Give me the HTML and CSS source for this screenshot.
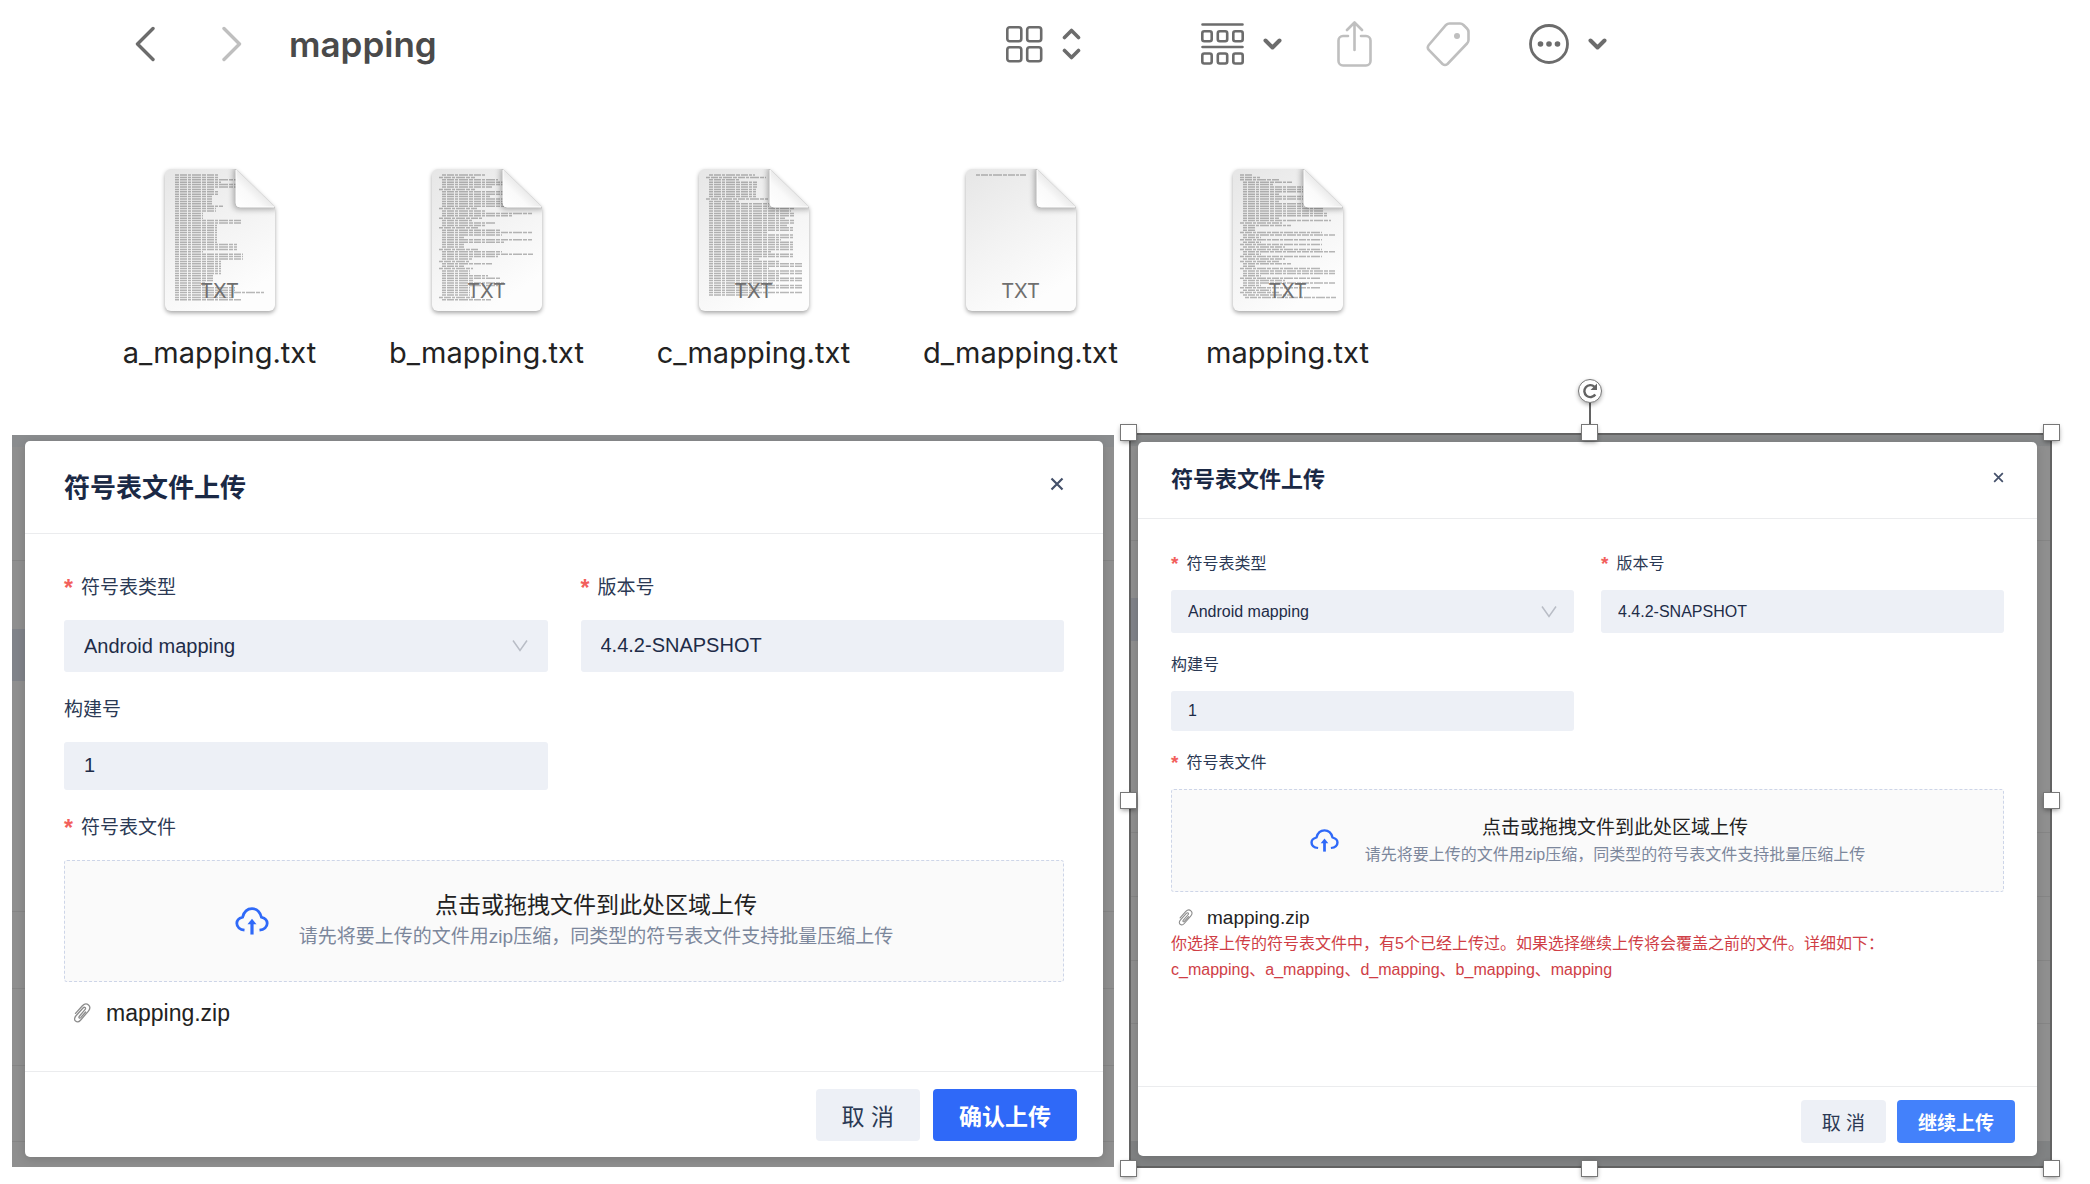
FILE: index.html
```html
<!DOCTYPE html>
<html lang="zh-CN">
<head>
<meta charset="utf-8">
<meta name="viewport" content="width=device-width, initial-scale=1">
<title>mapping</title>
<link rel="stylesheet" href="styles.css">
</head>
<body>
<svg class="defs" aria-hidden="true">
  <defs>
    <linearGradient id="paper" x1="0" y1="0" x2="0.5" y2="1">
      <stop offset="0" stop-color="#e6e6e6"/><stop offset="0.5" stop-color="#f2f2f2"/><stop offset="1" stop-color="#fdfdfd"/>
    </linearGradient>
    <linearGradient id="curl" x1="0" y1="1" x2="0.55" y2="0.45">
      <stop offset="0" stop-color="#ffffff"/><stop offset="0.6" stop-color="#fafafa"/><stop offset="1" stop-color="#e6e6e6"/>
    </linearGradient>
    <filter id="soft" x="-30%" y="-30%" width="160%" height="160%"><feGaussianBlur stdDeviation="3"/></filter>
    <clipPath id="sheet"><path d="M6 0H71L110 38V136a6 6 0 0 1-6 6H6a6 6 0 0 1-6-6V6a6 6 0 0 1 6-6z"/></clipPath>
    <symbol id="doc" viewBox="0 0 110 142" overflow="visible">
      <path d="M6 0H71L110 38V136a6 6 0 0 1-6 6H6a6 6 0 0 1-6-6V6a6 6 0 0 1 6-6z" fill="url(#paper)"/>
    </symbol>
    <symbol id="fold" viewBox="0 0 110 142" overflow="visible">
      <g clip-path="url(#sheet)"><path d="M69 0V36q0 4 4 4H112V30L76-4z" fill="#000" opacity="0.35" filter="url(#soft)"/></g>
      <path d="M71 0V34q0 4 4 4H110z" fill="url(#curl)"/>
      <path d="M71 1V34q0 4 4 4H109" fill="none" stroke="#fff"/>
    </symbol>
    <symbol id="down" viewBox="0 0 19 12"><path d="M2.500 2.500L9.500 9.500L16.500 2.500" fill="none" stroke="currentColor" stroke-width="4" stroke-linecap="round" stroke-linejoin="round"/></symbol>
    <symbol id="close" viewBox="0 0 14 14"><path d="M1.500 1.500L12.500 12.500M12.500 1.500L1.500 12.500" stroke="currentColor" stroke-width="2.200"/></symbol>
    <symbol id="arrow" viewBox="0 0 16 12"><path d="M1 0.500L8 10.500L15 0.500" fill="none" stroke="currentColor" stroke-width="1.500"/></symbol>
    <symbol id="cloud" viewBox="0 0 34 30" preserveAspectRatio="none">
      <path d="M9.500 24.800C5 24.300 1.800 21.500 1.800 17.500C1.800 14 4 12 7.600 11C9 5 12.500 1.800 17 1.800S25 5 26.400 11C30 12 32.200 14 32.200 17.500C32.200 21.500 29 24.300 24.500 24.800" fill="none" stroke="currentColor" stroke-width="2.800"/>
      <path d="M17 29.500V17" stroke="currentColor" stroke-width="3.200"/><path d="M17 12.500l4.500 6h-9z" fill="currentColor"/>
    </symbol>
    <symbol id="clip" viewBox="0 0 18 20">
      <path d="M6.200 13.500L12 6.700C13.600 4.800 11.400 3.400 10 5L3 12.800C-1 17.400 4.300 20.800 7.500 17.200L15.200 8.400C19.500 3.300 13.600-1.700 9.400 2.700L2.500 10.400M6.200 13.500C5.300 14.800 6.700 15.600 7.700 14.600L12.600 9" fill="none" stroke="currentColor" stroke-width="1.300" stroke-linecap="round"/>
    </symbol>
  </defs>
</svg>

<header class="bar">
  <nav class="bar-nav">
    <button class="icon-btn" aria-label="后退"><svg width="20" height="36" viewBox="0 0 20 36"><path d="M18 2.500L2.500 18L18 33.500" fill="none" stroke="currentColor" stroke-width="3.400" stroke-linecap="round" stroke-linejoin="round"/></svg></button>
    <button class="icon-btn faint" aria-label="前进"><svg width="20" height="36" viewBox="0 0 20 36"><path d="M2 2.500L17.500 18L2 33.500" fill="none" stroke="currentColor" stroke-width="3.400" stroke-linecap="round" stroke-linejoin="round"/></svg></button>
    <h1 class="bar-title">mapping</h1>
  </nav>
  <div class="bar-tools">
    <button class="icon-btn tool-view" aria-label="显示方式">
      <svg width="37" height="37" viewBox="0 0 37 37" fill="none" stroke="currentColor" stroke-width="2.600"><rect x="1.300" y="1.300" width="14" height="14" rx="2.500"/><rect x="21.200" y="1.300" width="14" height="14" rx="2.500"/><rect x="1.300" y="21.200" width="14" height="14" rx="2.500"/><rect x="21.200" y="21.200" width="14" height="14" rx="2.500"/></svg>
      <svg width="19" height="32" viewBox="0 0 19 32"><path d="M2.500 9.500L9.500 2.500L16.500 9.500M2.500 22.500L9.500 29.500L16.500 22.500" fill="none" stroke="currentColor" stroke-width="3.600" stroke-linecap="round" stroke-linejoin="round"/></svg>
    </button>
    <button class="icon-btn tool-group" aria-label="分组">
      <svg width="43" height="42" viewBox="0 0 43 42" fill="none" stroke="currentColor" stroke-width="2.600"><path d="M1.500 1.500H41.500M1.500 24H41.500" stroke-linecap="round"/><rect x="1.300" y="8.300" width="9.400" height="10" rx="2"/><rect x="16.800" y="8.300" width="9.400" height="10" rx="2"/><rect x="32.300" y="8.300" width="9.400" height="10" rx="2"/><rect x="1.300" y="30.500" width="9.400" height="10" rx="2"/><rect x="16.800" y="30.500" width="9.400" height="10" rx="2"/><rect x="32.300" y="30.500" width="9.400" height="10" rx="2"/></svg>
      <svg width="19" height="12"><use href="#down"/></svg>
    </button>
    <button class="icon-btn faint tool-share" aria-label="共享"><svg width="35" height="46" viewBox="0 0 35 46" fill="none" stroke="currentColor" stroke-width="2.600" stroke-linecap="round" stroke-linejoin="round"><path d="M11 15H6a4.500 4.500 0 0 0-4.500 4.500V40A4.500 4.500 0 0 0 6 44.500H29a4.500 4.500 0 0 0 4.500-4.500V19.500A4.500 4.500 0 0 0 29 15H24M17.500 29V2M10 9L17.500 1.500L25 9"/></svg></button>
    <button class="icon-btn faint tool-tag" aria-label="标签"><svg width="44" height="46" viewBox="0 0 44 46"><path d="M23.500 2.500H34q2 0 3.500 1.500L41 7.500q1.500 1.500 1.500 3.500V19q0 2-1.500 3.500L21.500 43q-2.500 2-5 0L2.800 29q-2-2.500 0-5L20 4q1.500-1.500 3.500-1.500z" fill="none" stroke="currentColor" stroke-width="2.600"/><circle cx="31" cy="15" r="3" fill="currentColor"/></svg></button>
    <button class="icon-btn tool-more" aria-label="更多">
      <svg width="40" height="40" viewBox="0 0 40 40"><circle cx="20" cy="20" r="18.500" fill="none" stroke="currentColor" stroke-width="2.800"/><circle cx="11.500" cy="20" r="2.800" fill="currentColor"/><circle cx="20" cy="20" r="2.800" fill="currentColor"/><circle cx="28.500" cy="20" r="2.800" fill="currentColor"/></svg>
      <svg width="19" height="12"><use href="#down"/></svg>
    </button>
  </div>
</header>

<ul class="files">
  <li class="file"><div class="doc"><svg class="doc-art" width="110" height="142"><use href="#doc"/><path class="rows" data-file="a"/><use href="#fold"/></svg><span class="doc-kind">TXT</span></div><span class="file-name">a_mapping.txt</span></li>
  <li class="file"><div class="doc"><svg class="doc-art" width="110" height="142"><use href="#doc"/><path class="rows" data-file="b"/><use href="#fold"/></svg><span class="doc-kind">TXT</span></div><span class="file-name">b_mapping.txt</span></li>
  <li class="file"><div class="doc"><svg class="doc-art" width="110" height="142"><use href="#doc"/><path class="rows" data-file="c"/><use href="#fold"/></svg><span class="doc-kind">TXT</span></div><span class="file-name">c_mapping.txt</span></li>
  <li class="file"><div class="doc"><svg class="doc-art" width="110" height="142"><use href="#doc"/><path class="rows" data-file="d"/><use href="#fold"/></svg><span class="doc-kind">TXT</span></div><span class="file-name">d_mapping.txt</span></li>
  <li class="file"><div class="doc"><svg class="doc-art" width="110" height="142"><use href="#doc"/><path class="rows" data-file="e"/><use href="#fold"/></svg><span class="doc-kind">TXT</span></div><span class="file-name">mapping.txt</span></li>
</ul>

<main class="shots">
  <section class="shot shot-large">
    <form class="modal">
      <header class="modal-head">
        <h2 class="modal-title">符号表文件上传</h2>
        <button type="button" class="modal-close" aria-label="关闭"><svg class="close-icon"><use href="#close"/></svg></button>
      </header>
      <div class="modal-body">
        <div class="fields">
          <div class="field">
            <label class="label required" for="type-1">符号表类型</label>
            <div class="select"><select class="control" id="type-1"><option>Android mapping</option></select><svg class="select-arrow"><use href="#arrow"/></svg></div>
          </div>
          <div class="field">
            <label class="label required" for="version-1">版本号</label>
            <input class="control" id="version-1" type="text" value="4.4.2-SNAPSHOT">
          </div>
          <div class="field">
            <label class="label" for="build-1">构建号</label>
            <input class="control control-short" id="build-1" type="text" value="1">
          </div>
        </div>
        <div class="field">
          <span class="label required" id="file-1">符号表文件</span>
          <button type="button" class="drop" aria-labelledby="file-1">
            <svg class="drop-icon"><use href="#cloud"/></svg>
            <span class="drop-text"><span class="drop-title">点击或拖拽文件到此处区域上传</span><span class="drop-hint">请先将要上传的文件用zip压缩，同类型的符号表文件支持批量压缩上传</span></span>
          </button>
        </div>
        <div class="upload"><svg class="upload-icon"><use href="#clip"/></svg><span>mapping.zip</span></div>
      </div>
      <footer class="modal-foot">
        <button type="button" class="btn">取 消</button>
        <button type="button" class="btn btn-primary">确认上传</button>
      </footer>
    </form>
  </section>

  <section class="shot shot-medium">
    <form class="modal">
      <header class="modal-head">
        <h2 class="modal-title">符号表文件上传</h2>
        <button type="button" class="modal-close" aria-label="关闭"><svg class="close-icon"><use href="#close"/></svg></button>
      </header>
      <div class="modal-body">
        <div class="fields">
          <div class="field">
            <label class="label required" for="type-2">符号表类型</label>
            <div class="select"><select class="control" id="type-2"><option>Android mapping</option></select><svg class="select-arrow"><use href="#arrow"/></svg></div>
          </div>
          <div class="field">
            <label class="label required" for="version-2">版本号</label>
            <input class="control" id="version-2" type="text" value="4.4.2-SNAPSHOT">
          </div>
          <div class="field">
            <label class="label" for="build-2">构建号</label>
            <input class="control control-short" id="build-2" type="text" value="1">
          </div>
        </div>
        <div class="field">
          <span class="label required" id="file-2">符号表文件</span>
          <button type="button" class="drop" aria-labelledby="file-2">
            <svg class="drop-icon"><use href="#cloud"/></svg>
            <span class="drop-text"><span class="drop-title">点击或拖拽文件到此处区域上传</span><span class="drop-hint">请先将要上传的文件用zip压缩，同类型的符号表文件支持批量压缩上传</span></span>
          </button>
        </div>
        <div class="upload"><svg class="upload-icon"><use href="#clip"/></svg><span>mapping.zip</span></div>
        <p class="error">你选择上传的符号表文件中，有5个已经上传过。如果选择继续上传将会覆盖之前的文件。详细如下：<br>c_mapping、a_mapping、d_mapping、b_mapping、mapping</p>
      </div>
      <footer class="modal-foot">
        <button type="button" class="btn">取 消</button>
        <button type="button" class="btn btn-primary">继续上传</button>
      </footer>
    </form>
    <span class="grip-stem"></span>
    <span class="grip top left"></span><span class="grip top center"></span><span class="grip top right"></span>
    <span class="grip middle left"></span><span class="grip middle right"></span>
    <span class="grip bottom left"></span><span class="grip bottom center"></span><span class="grip bottom right"></span>
    <button type="button" class="rotate" aria-label="旋转"><svg width="16" height="16" viewBox="0 0 16 16"><path d="M13.300 11.500A6 6 0 1 1 12.500 3.800" fill="none" stroke="#636363" stroke-width="2.400"/><path d="M15 0.500V7H8.500z" fill="#636363"/></svg></button>
  </section>
</main>
<script src="rows.js"></script>
</body>
</html>
```
FILE: rows.js
```js
// Preview lines of each text file: [number of rows, indent, length].
var previews = {
  a: [[2,10,43],[1,10,61],[1,10,46],[2,10,61],[1,10,40],[2,10,44],[4,10,37],[1,10,48],[2,10,41],[3,10,28],[2,10,66],[8,10,42],[3,10,62],[1,10,28],[3,10,68],[6,10,46],[3,10,38],[2,10,30],[2,10,60],[1,10,89],[2,10,58],[1,10,66]],
  b: [[1,10,44],[1,7,36],[1,10,56],[2,10,61],[1,10,50],[1,7,36],[2,10,62],[1,10,48],[2,10,62],[2,10,62],[1,7,38],[1,10,44],[1,10,90],[1,10,70],[1,7,44],[1,10,30],[1,10,54],[1,10,44],[1,7,40],[1,10,58],[1,10,90],[1,10,60],[1,10,22],[1,10,90],[1,10,62],[2,10,22],[1,7,40],[1,10,60],[1,10,91],[1,10,56],[1,10,30],[1,7,30],[1,10,50],[1,10,22],[1,7,34],[2,10,28],[1,10,46],[1,10,58],[1,10,32],[1,10,62],[1,10,56],[4,10,28],[1,7,34],[1,10,49]],
  c: [[1,10,46],[1,7,60],[1,10,30],[3,10,48],[4,10,47],[1,7,62],[1,10,30],[2,10,60],[1,10,86],[1,10,82],[2,10,86],[1,10,76],[2,10,86],[1,10,78],[2,10,84],[1,10,58],[2,10,84],[1,10,72],[2,10,84],[2,10,84],[1,10,62],[2,10,84],[1,10,50],[1,10,70],[2,10,94],[1,10,60],[2,10,94],[1,10,70],[2,10,94],[1,10,64],[2,10,94],[1,10,50],[1,10,94],[1,10,44]],
  d: [[1,10,50]],
  e: [[1,7,12],[1,7,20],[1,7,40],[1,10,49],[1,10,30],[3,10,60],[1,10,36],[2,10,60],[1,10,36],[2,10,60],[2,10,80],[2,10,84],[1,10,36],[1,10,88],[1,7,42],[1,10,48],[2,10,12],[1,7,82],[1,10,92],[1,10,18],[1,7,82],[1,10,18],[1,7,82],[1,10,42],[1,7,82],[1,10,92],[1,10,18],[1,7,82],[1,10,42],[1,7,40],[1,10,48],[1,10,12],[1,7,80],[2,10,92],[1,10,18],[1,7,80],[1,10,42],[1,10,92],[1,10,18],[1,7,80],[1,10,28],[1,7,40],[1,10,48],[1,12,91]]
};

document.querySelectorAll('.rows').forEach(function (path) {
  var y = 6;
  var d = '';
  previews[path.dataset.file].forEach(function (run) {
    for (var i = 0; i < run[0]; i++) {
      d += 'M' + run[1] + ' ' + y.toFixed(1) + 'h' + run[2];
      y += 2.4;
    }
  });
  path.setAttribute('d', d);
});
```
FILE: styles.css
```css
* { box-sizing: border-box; }

body {
  margin: 0;
  padding-bottom: 14px;
  background: #fff;
  font-family: "Liberation Sans", "Noto Sans CJK SC", sans-serif;
  color: #222;
}

button, input, select { font: inherit; color: inherit; }
button { border: 0; padding: 0; background: none; }
svg { display: block; flex: none; }
.defs { position: absolute; width: 0; height: 0; }

/* Finder toolbar */
.bar {
  display: grid;
  grid-template-columns: 1006fr 1084fr;
  height: 88px;
  font-family: Inter, sans-serif;
}
.bar-nav { display: flex; align-items: center; gap: 67px; padding-left: 135px; }
.bar-title { margin: 0 0 0 -20px; font-size: 35px; line-height: 44px; font-weight: 600; color: #4a4a4a; }
.bar-tools { display: flex; align-items: center; }
.icon-btn { display: flex; align-items: center; gap: 19px; color: #6c6c6c; }
.faint { color: #bfbfbf; }
.tool-group { margin-left: 120px; }
.tool-share { margin-left: 55px; }
.tool-tag { margin-left: 54px; }
.tool-more { margin-left: 59px; }

/* File icons */
.files { display: flex; margin: 81px 0 0; padding: 0 0 0 86px; list-style: none; font-family: Inter, sans-serif; }
.file { display: flex; flex-direction: column; align-items: center; width: 267px; }
.doc { display: grid; justify-items: center; }
.doc > * { grid-area: 1 / 1; }
.doc-art { overflow: visible; filter: drop-shadow(0 2px 2px rgba(0, 0, 0, 0.35)); }
.rows { fill: none; stroke: #555; stroke-width: 1.5; stroke-dasharray: 4 1 7 1 3 1 9 1; opacity: 0.42; }
.doc-kind { align-self: end; z-index: 1; margin-bottom: 8px; font-size: 20px; line-height: 24px; color: #6f6f6f; }
.file-name { margin-top: 22px; font-size: 29px; line-height: 40px; color: #222; }

/* Two dialog captures side by side */
.shots {
  display: grid;
  grid-template-columns: 1102fr 923fr;
  gap: 15px;
  align-items: center;
  margin-top: 60px;
  padding: 0 38px 0 12px;
}
.shot { background-color: #8f8f8f; background-repeat: no-repeat; }
.shot-large {
  --title: 26px; --title-line: 30px; --label: 19px; --label-line: 28px; --text: 20px; --lead: 23px; --lead-line: 32px;
  --side: 39px; --head-pad: 32px 39px 30px; --body-top: 40px; --body-bottom: 44px;
  --label-gap: 18px; --row-gap: 24px; --col-gap: 33px; --control: 52px; --control-short: 48px; --inset: 20px;
  --drop: 122px; --drop-gap: 30px; --icon: 34px; --icon-h: 28px; --clip: 18px; --clip-h: 20px; --close: 14px;
  --upload-gap: 15px; --upload-pad: 9px; --upload-top: 17px;
  --foot-pad: 17px 26px 16px; --btn-gap: 13px; --btn-pad: 26px; --primary: #2f69f8;
  padding: 6px 11px 10px 13px;
  background-image:
    linear-gradient(#8a8c8e, #8a8c8e),
    linear-gradient(#808389, #808389),
    linear-gradient(#858585, #858585), linear-gradient(#858585, #858585), linear-gradient(#858585, #858585), linear-gradient(#858585, #858585), linear-gradient(#858585, #858585);
  background-size: 100% 12px, 13px 52px, 100% 1px, 100% 1px, 100% 1px, 100% 1px, 100% 1px;
  background-position: 0 0, 0 194px, 0 125px, 0 476px, 0 553px, 0 630px, 0 706px;
}
.shot-medium {
  --title: 22px; --title-line: 28px; --label: 16px; --label-line: 23px; --text: 16px; --lead: 19px; --lead-line: 27px;
  --side: 33px; --head-pad: 24px 33px; --body-top: 33px; --body-bottom: 103px;
  --label-gap: 15px; --row-gap: 20px; --col-gap: 27px; --control: 43px; --control-short: 40px; --inset: 17px;
  --drop: 103px; --drop-gap: 26px; --icon: 29px; --icon-h: 23px; --clip: 15px; --clip-h: 17px; --close: 11px;
  --upload-gap: 14px; --upload-pad: 7px; --upload-top: 14px;
  --foot-pad: 13px 22px 13px; --btn-gap: 11px; --btn-pad: 21px; --primary: #4381fb;
  position: relative;
  border: 2px solid #636363;
  padding: 7px 13px 10px 7px;
  background-image:
    linear-gradient(#87898a, #87898a),
    linear-gradient(#808389, #808389),
    linear-gradient(#808283, #808283),
    linear-gradient(#858585, #858585), linear-gradient(#858585, #858585), linear-gradient(#858585, #858585), linear-gradient(#858585, #858585), linear-gradient(#858585, #858585);
  background-size: 100% 11px, 7px 43px, 100% 25px, 100% 1px, 100% 1px, 100% 1px, 100% 1px, 100% 1px;
  background-position: 0 0, 0 163px, 0 100%, 0 105px, 0 397px, 0 461px, 0 525px, 0 588px;
}

.modal { background: #fff; border-radius: 5px; box-shadow: 0 2px 10px rgba(0, 0, 0, 0.15); color: #1e2c48; }
.modal-head { display: flex; justify-content: space-between; align-items: flex-start; padding: var(--head-pad); border-bottom: 1px solid #ebecee; }
.modal-title { margin: 0; font-size: var(--title); line-height: var(--title-line); font-weight: 700; color: #1b2945; }
.modal-close { display: flex; align-items: center; height: 22px; color: #44506a; }
.close-icon { width: var(--close); height: var(--close); }

.modal-body { padding: var(--body-top) var(--side) var(--body-bottom); }
.fields { display: grid; grid-template-columns: 1fr 1fr; gap: var(--row-gap) var(--col-gap); margin-bottom: var(--row-gap); }
.field { display: flex; flex-direction: column; gap: var(--label-gap); min-width: 0; }
.label { display: flex; gap: 8px; font-size: var(--label); line-height: var(--label-line); color: #2b3954; }
.required::before { content: "*"; font-size: var(--lead); font-weight: 700; color: #f2605c; }
.control {
  width: 100%;
  height: var(--control);
  padding: 0 var(--inset);
  border: 0;
  border-radius: 3px;
  appearance: none;
  background: #edf0f6;
  font-size: var(--text);
  color: #1e2c48;
}
.control-short { height: var(--control-short); }
.select { display: grid; align-items: center; }
.select > * { grid-area: 1 / 1; }
.select-arrow { justify-self: end; width: 16px; height: 12px; margin-right: var(--inset); color: #b9bdc6; pointer-events: none; }

.drop {
  display: flex;
  align-items: center;
  justify-content: center;
  gap: var(--drop-gap);
  height: var(--drop);
  border: 1px dashed #cdd5e8;
  border-radius: 3px;
  background: #fafafa;
}
.drop-icon { width: var(--icon); height: var(--icon-h); color: #2f69f8; }
.drop-text { display: flex; flex-direction: column; line-height: var(--lead-line); }
.drop-title { font-size: var(--lead); color: #222; }
.drop-hint { font-size: var(--label); color: #7c879c; }

.upload { display: flex; align-items: center; gap: var(--upload-gap); margin-top: var(--upload-top); padding-left: var(--upload-pad); font-size: var(--lead); line-height: var(--label-line); color: #222; }
.upload-icon { width: var(--clip); height: var(--clip-h); color: #8c8c8c; }
.error { margin: 2px 0 0; font-size: 16px; line-height: 26px; color: #cf3e46; }

.modal-foot { display: flex; justify-content: flex-end; gap: var(--btn-gap); padding: var(--foot-pad); border-top: 1px solid #ebecee; }
.btn { height: var(--control); padding: 0 var(--btn-pad); border-radius: 4px; background: #edf0f6; font-size: var(--lead); color: #2b3954; }
.btn-primary { background: var(--primary); font-weight: 700; color: #fff; }

/* Selection frame handles, centred on the outer edge */
.grip { position: absolute; width: 15px; height: 15px; background: #fff; box-shadow: 0 0 0 1px #777, 0 2px 5px rgba(0, 0, 0, 0.45); }
.top { top: -10px; }
.middle { top: calc(50% - 8px); }
.bottom { bottom: -10px; }
.left { left: -10px; }
.center { left: calc(50% - 9px); }
.right { right: -9px; }
.grip-stem { position: absolute; top: -32px; left: calc(50% - 2px); width: 2px; height: 32px; background: #636363; }
.rotate {
  position: absolute;
  top: -56px;
  left: calc(50% - 13px);
  display: grid;
  place-items: center;
  width: 24px;
  height: 24px;
  border: 1px solid #777;
  border-radius: 50%;
  background: #fff;
  box-shadow: 0 2px 4px rgba(0, 0, 0, 0.3);
}
```
